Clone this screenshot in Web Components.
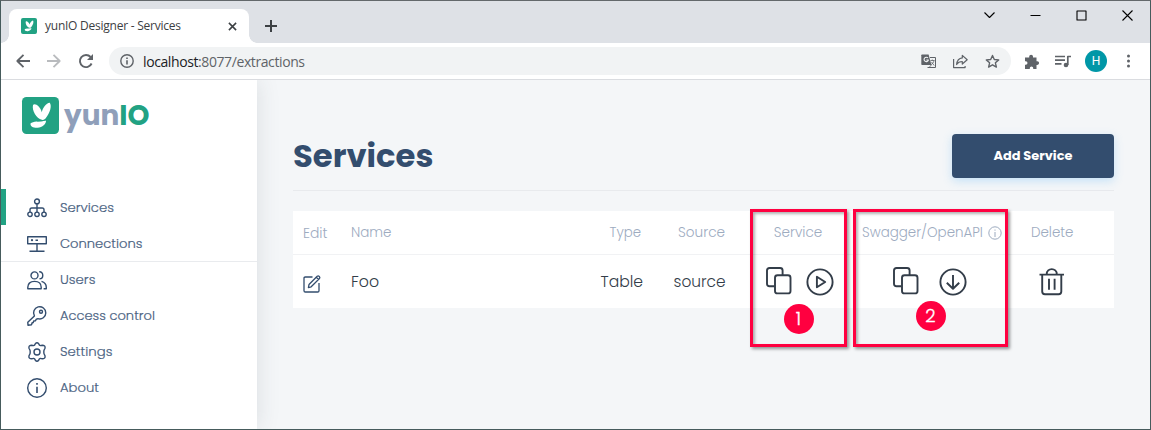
<!DOCTYPE html>
<html lang="en">
<head>
<meta charset="utf-8">
<title>yunIO Designer - Services</title>
<style>
html,body{margin:0;height:100%;overflow:hidden}
body{font-family:Poppins,Inter,sans-serif;color:#334d6e}
</style>
</head>
<body>
<browser-window>
  <service-page></service-page>
</browser-window>
<script>
const define = (name, html, setup) => {
  const t = document.createElement('template');
  t.innerHTML = html;
  customElements.define(name, class extends HTMLElement {
    connectedCallback() {
      if (this.shadowRoot) return;
      this.attachShadow({mode: 'open'}).append(t.content.cloneNode(true));
      if (setup) setup(this, this.shadowRoot);
    }
  });
};

const logo = '<rect width="37" height="37" rx="4.500" fill="#22a283"/><path d="M11 8C12.800 5.500 18.500 9.500 19.800 15.200C20.500 11 24.500 5.500 27.800 5.700C30 9 28.200 15.500 23.500 21.500Q22.300 23.200 19.800 22.800C14.500 21.500 9.700 13.500 11 8Z M8.600 26.300C11 24 17 24.800 24 23.400C24.300 27 20.500 30.300 15.500 30.800C11.500 31 7.800 29.500 8.600 26.300Z" fill="#fff"/><path d="M15 24.100Q20 24.500 24.500 22.700" fill="none" stroke="#22a283" stroke-width=".7"/>';

/* name: [viewBox, stroke width, markup] */
const ICONS = {
  logo: ['0 0 37 37', 0, logo],
  close: ['0 0 10 10', 1.7, '<path d="M1 1l8 8M9 1 1 9"/>'],
  plus: ['0 0 12 12', 2, '<path d="M6 0v12M0 6h12"/>'],
  chev: ['0 0 11 7', 1.1, '<path d="M.5.500 5.500 5.500l5-5"/>'],
  min: ['0 0 11 11', 1, '<path d="M.5 5.500h10"/>'],
  max: ['0 0 11 11', 1, '<path d="M1 1h9v9H1z" stroke-width="1.100"/>'],
  x: ['0 0 11 11', 1.1, '<path d="M.5.500l10 10M10.500.500l-10 10"/>'],
  back: ['0 0 14 14', 1.8, '<path d="M14 7H1.500M7.500.800 1.300 7l6.200 6.200"/>'],
  fwd: ['0 0 14 14', 1.8, '<path d="M0 7h12.500M6.500.800 12.700 7l-6.200 6.200"/>'],
  reload: ['0 0 16 16', 1.9, '<path d="M13.600 10.500A6.100 6.100 0 1 1 12.600 4"/><path d="M15 1v6H9z" fill="currentColor" stroke="none"/>'],
  site: ['0 0 14 14', 1.4, '<circle cx="7" cy="7" r="6.200"/><path d="M7 6.200v4.300M7 3.500v1.500" stroke-width="1.600"/>'],
  translate: ['0 0 15 15', 1, '<path d="M9 3.500h5.500v10H6.500"/><path d="M1 .5h6.600l2.800 10.400H1Q.300 10.900.300 10V1.200Q.300.500 1 .500Z" fill="currentColor" stroke="none"/><path d="M7 4a2.200 2.200 0 1 0 .4 2H5.300" stroke="#f1f3f4" stroke-width="1.100"/><path d="M9.500 6.500h4M11.300 5.500v1M13 6.500c-.3 2-1.500 3.300-3 4.200M10.500 8l2.700 3.500M10.300 11 8 13.500" stroke-width=".8"/>'],
  share: ['0 0 15 15', 1.2, '<path d="M.6 5v8.600h11.500V12"/><path d="M9.300 1.400 14.200 5.700 9.300 10V7.500C6.500 7.500 4.800 8.500 3.600 10.500 4 7 5.900 4.300 9.300 3.900z"/>'],
  star: ['0 0 15 15', 1.4, '<path d="M7.500 1.500l1.800 4 4.400.4-3.300 2.900 1 4.300-3.900-2.300-3.900 2.300 1-4.300L1.300 5.900l4.400-.4z"/>'],
  puzzle: ['0 0 15 15', 0, '<path fill="currentColor" d="M1 3.500h4.200V2.600a1.900 1.900 0 0 1 3.800 0v.9h3.500v3.800h.8a1.800 1.800 0 0 1 0 3.600h-.8v4H9.200v-.8a1.700 1.700 0 0 0-3.400 0v.8H1V10.700h.8a1.700 1.700 0 0 0 0-3.400H1z"/>'],
  queue: ['0 0 17 13', 1.7, '<path d="M0 1.500h10M0 5.200h10M0 8.900h6.500M12.800 10V1.500H16"/><circle cx="11" cy="10" r="2.300" fill="currentColor" stroke="none"/>'],
  dots: ['0 0 3 14', 0, '<g fill="currentColor"><circle cx="1.500" cy="1.900" r="1.500"/><circle cx="1.500" cy="7" r="1.500"/><circle cx="1.500" cy="12.100" r="1.500"/></g>'],
  services: ['0 0 20 20', 1.4, '<circle cx="10" cy="3.400" r="2.400"/><circle cx="3" cy="16.300" r="2.200"/><circle cx="10" cy="16.300" r="2.200"/><circle cx="17" cy="16.300" r="2.200"/><path d="M10 6v8M3 14v-2.200Q3 10 4.800 10h10.400Q17 10 17 11.800V14"/>'],
  connections: ['0 0 20 20', 1.4, '<path d="M.7 2.700h18.600v7H.7zM10 9.700v7.600M2.500 17.300h15M8.500 6.200H11" /><circle cx="5" cy="6.200" r="1.100" fill="currentColor" stroke="none"/>'],
  users: ['0 0 20 20', 1.4, '<circle cx="7.500" cy="5.400" r="3.500"/><path d="M.8 18.800v-1.500C.8 13.500 3.500 11.400 7.500 11.400s6.700 2.100 6.700 5.900v1.500zM12.200 1.800c4.700-.3 4.700 6.900.3 7M14.500 11.400c3 .8 4.800 3 4.800 6v1.400h-2.700"/>'],
  key: ['0 0 20 20', 1.4, '<path d="M7.400 9.900A6.100 6.100 0 1 1 11 12.700L9.300 13.100 8.500 14.700 6.700 15 6.200 16.500 5 17 4.600 18.700 1 19.200.8 16.300z"/><circle cx="14" cy="5.800" r="1.500"/>'],
  gear: ['0 0 20 20', 1.4, '<path d="M8.300 1.700Q10-.2 11.700 1.700L12.300 3Q13 3.800 14 3.500L15.800 3.200Q18.600 3.700 18 6.200L17 8.200Q16.600 10 17 11.800L18 13.800Q18.600 16.300 15.800 16.800L14 16.500Q13 16.200 12.300 17L11.700 18.300Q10 20.200 8.300 18.300L7.700 17Q7 16.200 6 16.500L4.200 16.800Q1.400 16.300 2 13.800L3 11.800Q3.400 10 3 8.200L2 6.200Q1.400 3.700 4.200 3.200L6 3.500Q7 3.800 7.700 3z"/><circle cx="10" cy="10" r="3"/>'],
  about: ['0 0 20 20', 1.4, '<circle cx="10" cy="10" r="9.300"/><path d="M10 8.800v6.200M10 5v1.800" stroke-width="1.600"/>'],
  edit: ['0 0 18 18', 1.3, '<path d="M9.500 2H2.300Q1 2 1 3.300v12.400Q1 17 2.300 17h12.400Q16 17 16 15.700V8"/><path d="M6 9.500 14.200 1.200Q15.300.500 16.300 1.500T16.500 3.500L8.200 11.800 5.400 12.600zM13.300 2.200l2.300 2.300"/>'],
  copy: ['0 0 26 28', 1.9, '<path d="M8.500 19.200H3.500Q1 19.200 1 16.700V3.500Q1 1 3.500 1h10.600q2.500 0 2.500 2.500V8"/><rect x="9" y="8.200" width="15.500" height="18.200" rx="2.500"/>'],
  play: ['0 0 28 28', 1.9, '<circle cx="14" cy="14" r="12.600"/><path d="M10.900 8.800v10.400L19.200 14z"/>'],
  download: ['0 0 28 28', 1.9, '<circle cx="14" cy="14" r="12.600"/><path d="M14 7v14M7.800 14.700 14 20.800l6.200-6.100"/>'],
  trash: ['0 0 26 28', 1.9, '<path d="M.5 6.600h24.500M3.200 6.600v17q0 2.700 2.700 2.700h13.700q2.700 0 2.700-2.700v-17M7.700 6.300C7.500-.6 18-.6 17.800 6.300M10 10.800v11M15.600 10.800v11"/>'],
  info: ['0 0 14 14', 1, '<circle cx="7" cy="7" r="6.200"/><path d="M7 6v5M7 3.500v1.200"/>']
};

define('ui-icon', '<style>:host{display:block;flex:none}svg{display:block;overflow:visible}</style><svg fill="none" stroke="currentColor" stroke-linejoin="round"></svg>', (el, root) => {
  const [box, weight, body] = ICONS[el.getAttribute('name')];
  const svg = root.querySelector('svg');
  const [, , w, h] = box.split(' ').map(Number);
  const width = Number(el.getAttribute('size')) || w;
  svg.setAttribute('viewBox', box);
  svg.setAttribute('width', width);
  svg.setAttribute('height', width * h / w);
  svg.setAttribute('stroke-width', weight);
  svg.innerHTML = body;
});

/* A label that fills the given measure: by its type size, or by tracking with the "track" attribute. */
define('fit-text', '<style>:host{display:block;flex:none;white-space:nowrap}span{display:inline-block}</style><span><slot></slot></span>', (el, root) => {
  const want = Number(el.getAttribute('w'));
  const span = root.querySelector('span');
  const width = () => span.getBoundingClientRect().width;
  if (!el.hasAttribute('track')) {
    const size = parseFloat(getComputedStyle(span).fontSize);
    span.style.fontSize = size * want / width() + 'px';
    return;
  }
  const gap = (want - width()) / (el.textContent.length - 1);
  span.style.letterSpacing = gap + 'px';
  span.style.marginRight = -gap + 'px';
});

define('tab-strip', `<style>
:host{display:flex;height:42px;background:#dee1e6;font:12px "Open Sans","Noto Sans",sans-serif;color:#3c4043;position:relative}
.tab{display:flex;align-items:center;box-sizing:border-box;width:240px;height:34px;margin:8px 0 0 8px;padding:0 12px;background:#fff;border-radius:8px 8px 0 0;position:relative}
.tab::before,.tab::after{content:"";position:absolute;bottom:0;width:8px;height:8px}
.tab::before{left:-8px;background:radial-gradient(circle at 0 0,#0000 7.500px,#fff 8px)}
.tab::after{right:-8px;background:radial-gradient(circle at 100% 0,#0000 7.500px,#fff 8px)}
fit-text{margin:0 0 1px 8px}
.tab ui-icon:last-child{margin-left:auto;width:9px}
.new{margin:19px 0 0 16px;color:#3c4043}
.win{margin-left:auto;display:flex;align-items:center;height:28px;gap:35px;padding-right:17.500px;color:#000}
</style>
<div class="tab"><ui-icon name="logo" size="16"></ui-icon><fit-text track w="136">yunIO Designer - Services</fit-text><ui-icon name="close" size="9"></ui-icon></div>
<ui-icon class="new" name="plus"></ui-icon>
<div class="win"><ui-icon name="chev"></ui-icon><ui-icon name="min"></ui-icon><ui-icon name="max"></ui-icon><ui-icon name="x"></ui-icon></div>`);

define('tool-bar', `<style>
:host{display:flex;align-items:center;height:36px;box-sizing:content-box;border-bottom:1px solid #dadce0;background:#fff;color:#5f6368;font:14px "Open Sans","Noto Sans",sans-serif;padding-left:15px}
.nav{display:flex;gap:17px;align-items:center;width:93px}
.off{color:#b9bbbe}
.url{display:flex;align-items:center;box-sizing:border-box;width:902px;height:28px;border-radius:14px;background:#f1f3f4;padding:0 11px}
.url fit-text{margin-left:9px}.url b{font-weight:400;color:#202124}
.acts{margin-left:auto;display:flex;gap:17px;align-items:center}
.right{display:flex;align-items:center;margin-left:13px}
.who{width:22px;height:22px;border-radius:50%;background:#0097a7;color:#fff;font:12px/22px Roboto,sans-serif;text-align:center;margin:0 20px 0 13px}
</style>
<div class="nav"><ui-icon name="back"></ui-icon><ui-icon class="off" name="fwd"></ui-icon><ui-icon name="reload"></ui-icon></div>
<div class="url"><ui-icon name="site"></ui-icon><fit-text track w="162"><b>localhost</b>:8077/extractions</fit-text>
<div class="acts"><ui-icon name="translate"></ui-icon><ui-icon name="share"></ui-icon><ui-icon name="star"></ui-icon></div></div>
<div class="right"><ui-icon name="puzzle"></ui-icon><ui-icon name="queue" style="margin-left:16px"></ui-icon><div class="who">H</div><ui-icon name="dots"></ui-icon></div>`);

define('browser-window', `<style>
:host{display:flex;flex-direction:column;box-sizing:border-box;width:1151px;height:430px;border:1px solid #465b5c;border-top-color:#63686b;background:#f4f5f7}
</style><tab-strip></tab-strip><tool-bar></tool-bar><slot></slot>`);

/* Attributes: icon, label, and w for the label's measure. */
customElements.define('side-link', class extends HTMLElement {
  connectedCallback() {
    const a = n => this.getAttribute(n);
    this.attachShadow({mode: 'open'}).innerHTML = `<style>
:host{display:flex;align-items:center;box-sizing:border-box;height:36px;padding-left:26px;font-size:13px;font-weight:300;-webkit-text-stroke:.2px currentColor;color:#49617f}
:host([active]){border-left:5px solid #22a283;padding-left:21px;padding-top:1px}
:host([rule]){height:37px;padding-top:2px;border-bottom:1px solid #e9ebee}
ui-icon{margin-right:13px;color:#334d6e}
</style><ui-icon name="${a('icon')}"></ui-icon><fit-text w="${a('w')}">${a('label')}</fit-text>`;
  }
});

define('side-bar', `<style>
:host{display:flex;flex-direction:column;flex:none;width:256px;background:#fff;box-shadow:0 0 22px rgba(50,60,70,.13);z-index:1}
header{display:flex;align-items:center;height:37px;padding:17px 0 0 21px}
.word{font-weight:700;font-size:28px;line-height:37px;color:#8f9fba;margin-left:5px}
.word b{color:#22a283;font-weight:700}
nav{display:flex;flex-direction:column;margin-top:55px}
</style>
<header><ui-icon name="logo"></ui-icon><fit-text class="word" w="85.500">yun<b>IO</b></fit-text></header>
<nav>
<side-link active icon="services" w="54" label="Services"></side-link>
<side-link rule icon="connections" w="82.500" label="Connections"></side-link>
<side-link icon="users" w="35.500" label="Users"></side-link>
<side-link icon="key" w="95" label="Access control"></side-link>
<side-link icon="gear" w="52.500" label="Settings"></side-link>
<side-link icon="about" w="39" label="About"></side-link>
</nav>`);

define('service-table', `<style>
:host{display:block;background:#fff;height:97px;position:relative}
.row{display:grid;grid-template-columns:48px 199px 92px 82px 147px 123px 1fr;align-items:center;padding-left:10px;box-sizing:border-box}
.head{height:44px;padding-top:1px;border-bottom:1px solid #f1f2f4;color:#9dabbf;font-size:13px;font-weight:300}
.body{height:53px;color:#333d49;font-size:15px;font-weight:300}
.r{justify-self:end}.c{justify-self:center}
.pair{display:flex;align-items:center}
.edit{color:#334d6e;margin-top:5px}
.api{display:flex;align-items:center;gap:5px;margin-left:-9px}
.pair .up{margin-top:-2px}
.mark{position:absolute;box-sizing:border-box;top:-2px;height:138px;border:3px solid #ff0040;box-shadow:2px 2px 3px rgba(0,0,0,.4),inset 2px 2px 3px rgba(0,0,0,.3)}
.dot{position:absolute;width:30px;height:30px;border-radius:50%;background:#ff0040;color:#fff;text-align:center;font:300 18px/30px Poppins,Inter,sans-serif;-webkit-text-stroke:.3px #fff}
</style>
<div class="row head"><fit-text w="24.500">Edit</fit-text><fit-text w="40.500">Name</fit-text><fit-text class="r" w="31.500" style="margin-right:1px">Type</fit-text><fit-text class="r" w="47" style="margin-right:-1px">Source</fit-text><fit-text class="c" w="48.500" style="margin-left:1px">Service</fit-text>
<div class="api"><fit-text w="121">Swagger/OpenAPI</fit-text><ui-icon name="info"></ui-icon></div><fit-text w="42.500" style="margin-left:37px">Delete</fit-text></div>
<div class="row body"><ui-icon class="edit" name="edit"></ui-icon><fit-text w="28">Foo</fit-text><fit-text w="42.500" class="r" style="margin-right:-1px">Table</fit-text><fit-text w="52" class="r" style="margin-right:-1.500px">source</fit-text>
<div class="pair" style="margin-left:41.500px;gap:14px"><ui-icon class="up" name="copy"></ui-icon><ui-icon name="play"></ui-icon></div>
<div class="pair" style="margin-left:21.500px;gap:20px"><ui-icon class="up" name="copy"></ui-icon><ui-icon name="download"></ui-icon></div>
<ui-icon name="trash" style="margin-left:45px"></ui-icon></div>
<div class="mark" style="left:457px;width:97px"></div><div class="mark" style="left:560px;width:155px"></div>
<div class="dot" style="left:490.500px;top:92.500px">1</div><div class="dot" style="left:622.500px;top:89.500px">2</div>`);

define('service-page', `<style>
:host{display:flex;flex:1;min-height:0;overflow:hidden;background:#f4f6f8}
main{flex:1;padding:54px 36px 0}
header{display:flex;align-items:center;justify-content:space-between;height:56px;border-bottom:1px solid #e8eaed;margin-bottom:20px}
h1{margin:0 0 12px;font-size:32px;line-height:44px;font-weight:700}
button{width:162px;height:44px;margin:0 0 12px;border:0;border-radius:4px;background:#334d6e;color:#fff;font:700 13px Poppins,Inter,sans-serif;display:flex;align-items:center;justify-content:center;box-shadow:0 3px 10px rgba(90,180,245,.3)}
</style><side-bar></side-bar><main><header><h1><fit-text w="140.500">Services</fit-text></h1><button><fit-text w="79">Add Service</fit-text></button></header><service-table></service-table></main>`);
</script>
</body>
</html>
